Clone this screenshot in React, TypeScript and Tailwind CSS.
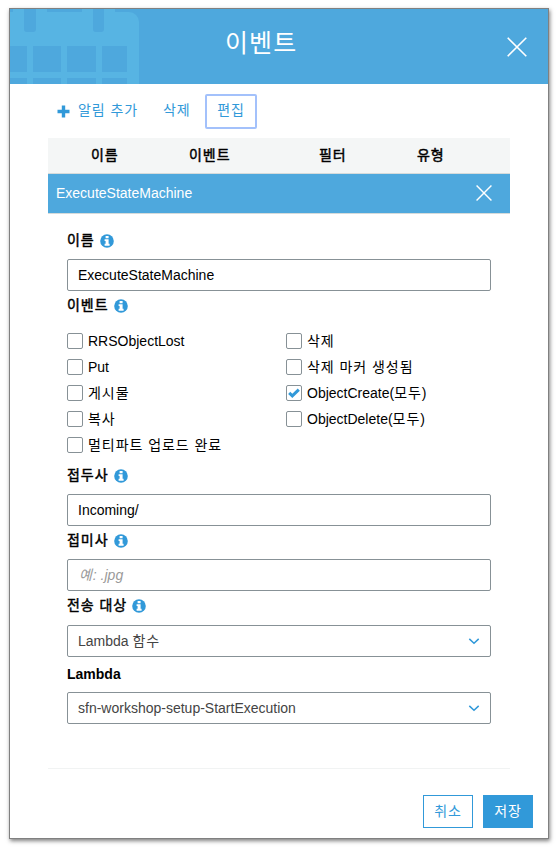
import type { ReactNode } from 'react';

const Ko = ({ children }: { children: ReactNode }) => (
  <span className="tracking-[0.95px]">{children}</span>
);

const KoBold = ({ children }: { children: ReactNode }) => (
  <span className="font-normal tracking-[0.95px] [-webkit-text-stroke:0.45px_#000]">{children}</span>
);

const Info = () => (
  <svg className="mt-[2px] size-[14px] shrink-0" viewBox="0 0 14 14">
    <circle cx="7" cy="7" r="6.8" fill="#3199d9" />
    <path d="M5.600 2h3v2.300h-3zM4.600 5.200h4v4.600h1v2H4.600v-2h1V7.100h-1z" fill="#fff" />
  </svg>
);

const Cross = ({ size, width }: { size: number; width: number }) => (
  <svg width={size} height={size} viewBox="0 0 20 20" stroke="#fff" strokeWidth={width}>
    <path d="M.7.7 19.3 19.3M19.3.7.7 19.3" />
  </svg>
);

const Label = ({ children, info = true }: { children: ReactNode; info?: boolean }) => (
  <div className="flex h-5 items-center gap-[5px] font-bold">
    <span>{children}</span>
    {info && <Info />}
  </div>
);

const fieldBox =
  'flex h-8 w-[424px] items-center rounded-[2px] border border-[#879196] bg-white px-[10px]';

const Select = ({ children }: { children: ReactNode }) => (
  <div className={`${fieldBox} justify-between text-[#444]`}>
    <span>{children}</span>
    <svg className="size-[12px]" viewBox="0 0 12 12" fill="none" stroke="#3199d9" strokeWidth="1.5">
      <path d="M1.300 3.900 6 8.300 10.700 3.900" />
    </svg>
  </div>
);

const Check = ({ children, checked = false }: { children: ReactNode; checked?: boolean }) => (
  <div className="flex h-[26px] items-center gap-[5px]">
    <span className="flex size-4 items-center justify-center rounded-[2px] border border-[#879196]">
      {checked && (
        <svg className="size-[12px]" viewBox="0 0 12 12" fill="none" stroke="#3199d9" strokeWidth="3">
          <path d="M1.200 5.900 4.300 8.900 10.800 2.600" />
        </svg>
      )}
    </span>
    <span>{children}</span>
  </div>
);

const Calendar = () => (
  <svg className="absolute left-0 top-0 h-[75px] w-[130px]" viewBox="0 0 130 75">
    <path
      fill="#57b4e3"
      d="M0 3h3V0h34v3h35V0h33v3h14a10 10 0 0 1 10 10v62H0Z"
    />
    <g fill="#4ea8dd">
      <path d="M14 0h12v20a3 3 0 0 1-3 3h-6a3 3 0 0 1-3-3zM83 0h11v20a3 3 0 0 1-3 3h-5a3 3 0 0 1-3-3z" />
      <path d="M0 37h17v26H0zM23 37h28v26H23zM57 37h29v26H57zM92 37h25v26H92z" />
      <path d="M0 69h17v6H0zM23 69h28v6H23zM57 69h29v6H57zM92 69h25v6H92z" />
    </g>
  </svg>
);

export default function App() {
  return (
    <div className="h-[847px] w-[557px] bg-white pl-[9px] pt-[8px] font-['Liberation_Sans','Noto_Sans_CJK_KR',sans-serif] text-[14px] leading-5 text-black">
      <div className="flex h-[831px] w-[540px] flex-col border border-[#808080] shadow-[1px_2px_4px_rgba(0,0,0,0.5)]">
        <header className="relative flex h-[75px] shrink-0 items-center justify-end bg-[#4ea8dd] pr-[21px]">
          <Calendar />
          <h1 className="absolute left-[215px] top-[17px] text-[25px] leading-[34px] tracking-[1.1px] text-white">이벤트</h1>
          <Cross size={20} width={1.6} />
        </header>

        <div className="flex h-[54px] shrink-0 items-center pl-[47px] text-[#3199d9]">
          <svg className="mr-[8px] size-[13px]" viewBox="0 0 13 13" fill="#3199d9">
            <path d="M4.800.5h3.400v4.300h4.300v3.400H8.200v4.300H4.800V8.200H.5V4.800h4.300z" />
          </svg>
          <span className="w-[85px] pb-[2px]"><Ko>알림 추가</Ko></span>
          <span className="w-[42px] pb-[2px]"><Ko>삭제</Ko></span>
          <button className="flex h-[35px] w-[52px] items-center justify-center rounded-[2px] border-2 border-[#a3c1fb] pb-[2px]">
            <Ko>편집</Ko>
          </button>
        </div>

        <div className="ml-[38px] w-[462px]">
          <div className="flex h-9 items-center border-b border-[#d5dbdb] bg-[#f4f6f6] pb-[2px] pl-[43px]">
            <span className="w-[98px]"><KoBold>이름</KoBold></span>
            <span className="w-[130px]"><KoBold>이벤트</KoBold></span>
            <span className="w-[98px]"><KoBold>필터</KoBold></span>
            <span><KoBold>유형</KoBold></span>
          </div>
          <div className="flex h-10 items-center justify-between border-b border-[#d5dbdb] bg-[#4ea8dd] pb-px pl-2 pr-[18px] text-white">
            <span>ExecuteStateMachine</span>
            <Cross size={16} width={1.8} />
          </div>

          <div className="h-[555px] border-b border-[#f1f3f3] pl-[19px] pt-[16px]">
            <Label><KoBold>이름</KoBold></Label>
            <div className={`${fieldBox} mt-[9px]`}>ExecuteStateMachine</div>
            <div className="mt-[4px]"><Label><KoBold>이벤트</KoBold></Label></div>
            <div className="mt-[13px] flex">
              <div className="w-[219px]">
                <Check>RRSObjectLost</Check>
                <Check>Put</Check>
                <Check><Ko>게시물</Ko></Check>
                <Check><Ko>복사</Ko></Check>
                <Check><Ko>멀티파트 업로드 완료</Ko></Check>
              </div>
              <div>
                <Check><Ko>삭제</Ko></Check>
                <Check><Ko>삭제 마커 생성됨</Ko></Check>
                <Check checked>ObjectCreate(<Ko>모두</Ko>)</Check>
                <Check>ObjectDelete(<Ko>모두</Ko>)</Check>
              </div>
            </div>
            <div className="mt-[7px]"><Label><KoBold>접두사</KoBold></Label></div>
            <div className={`${fieldBox} mt-[9px]`}>Incoming/</div>
            <div className="mt-[4px]"><Label><KoBold>접미사</KoBold></Label></div>
            <div className={`${fieldBox} mt-[9px] italic text-[#999]`}>
              <span className="ml-px"><Ko>예</Ko>: .jpg</span>
            </div>
            <div className="mt-[4px]"><Label><KoBold>전송 대상</KoBold></Label></div>
            <div className="mt-[10px]"><Select>Lambda <Ko>함수</Ko></Select></div>
            <div className="mt-[7px]"><Label info={false}>Lambda</Label></div>
            <div className="mt-[8px]"><Select>sfn-workshop-setup-StartExecution</Select></div>
          </div>
        </div>

        <footer className="mt-[26px] flex justify-end gap-[10px] pr-[15px]">
          <button className="h-[33px] w-[50px] border border-[#3199d9] pb-[2px] text-[#3199d9]"><Ko>취소</Ko></button>
          <button className="h-[33px] w-[50px] bg-[#3199d9] pb-[2px] text-white"><Ko>저장</Ko></button>
        </footer>
      </div>
    </div>
  );
}
